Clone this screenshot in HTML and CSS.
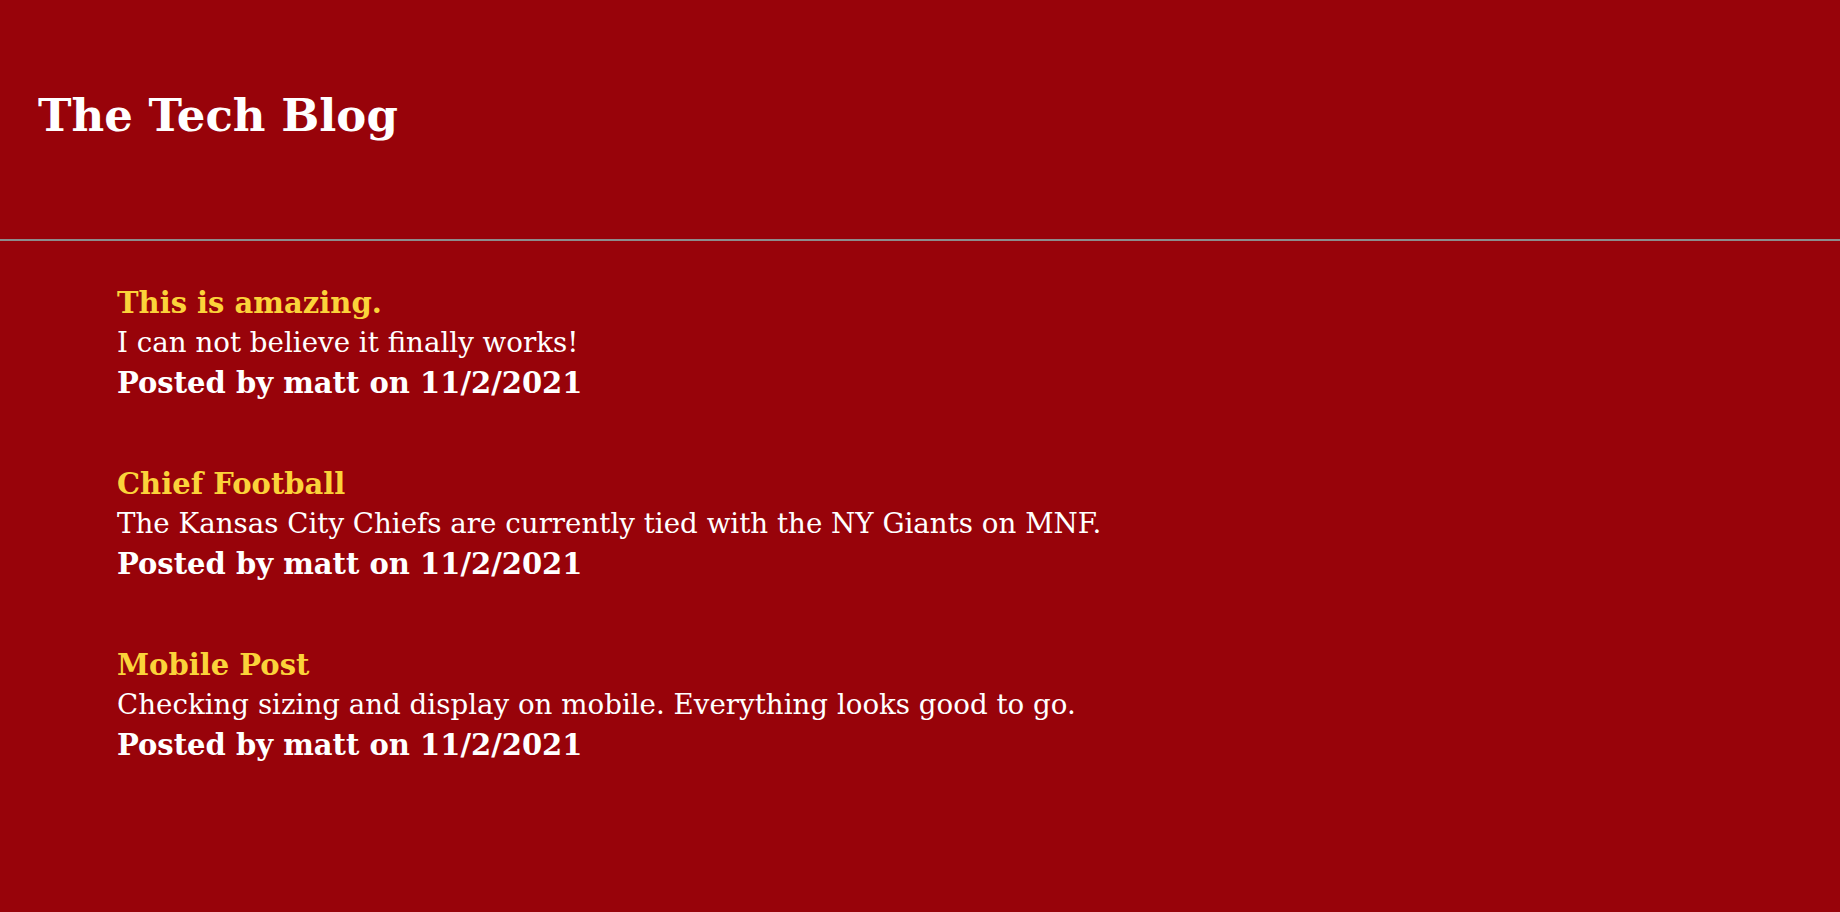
FILE: index.html
```html
<!DOCTYPE html>
<html>
<head>
<meta charset="utf-8">
<title>The Tech Blog</title>
<link rel="stylesheet" href="styles.css">
</head>
<body>
<header class="site-header">
  <h1 class="site-title">The Tech Blog</h1>
</header>
<main class="posts">
  <article class="post">
    <h2 class="post-title">This is amazing.</h2>
    <p class="post-body">I can not believe it finally works!</p>
    <p class="post-meta">Posted by matt on 11/2/2021</p>
  </article>
  <article class="post">
    <h2 class="post-title">Chief Football</h2>
    <p class="post-body">The Kansas City Chiefs are currently tied with the NY Giants on MNF.</p>
    <p class="post-meta">Posted by matt on 11/2/2021</p>
  </article>
  <article class="post">
    <h2 class="post-title">Mobile Post</h2>
    <p class="post-body">Checking sizing and display on mobile. Everything looks good to go.</p>
    <p class="post-meta">Posted by matt on 11/2/2021</p>
  </article>
</main>
</body>
</html>
```
FILE: styles.css
```css
html, body {
  margin: 0;
  padding: 0;
}
body {
  background: #98030a;
  color: #ffffff;
  font-family: "DejaVu Serif", Georgia, serif;
  min-height: 912px;
}
.site-header {
  box-sizing: border-box;
  height: 241px;
  display: flex;
  align-items: center;
  padding: 0 38px 9px;
  border-bottom: 2px solid #8c8c8c;
}
.site-title {
  margin: 0;
  font-size: 45px;
  font-weight: bold;
}
.posts {
  display: flex;
  flex-direction: column;
  gap: 61px;
  padding: 42px 117px;
}
.post-title {
  margin: 0;
  font-size: 29px;
  line-height: 40px;
  color: #fbd33a;
  font-weight: bold;
}
.post-body {
  margin: 0;
  font-size: 27.7px;
  line-height: 40px;
}
.post-meta {
  margin: 0;
  font-size: 29px;
  line-height: 40px;
  font-weight: bold;
}
```
